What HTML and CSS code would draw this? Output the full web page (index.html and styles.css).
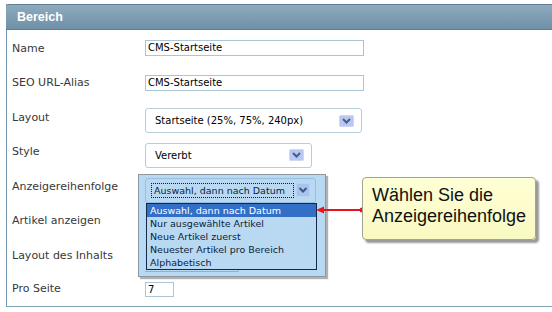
FILE: index.html
```html
<!DOCTYPE html>
<html lang="de">
<head>
<meta charset="UTF-8">
<meta name="viewport" content="width=device-width, initial-scale=1.0">
<title>Bereich</title>
<link rel="stylesheet" href="styles.css">
</head>
<body>
    <div class="panel">
        <div class="panel-head">Bereich</div>
        <div class="panel-body">
            <div class="row">
                <span class="label">Name</span>
                <span class="field">CMS-Startseite</span>
            </div>
            <div class="row">
                <span class="label">SEO URL-Alias</span>
                <span class="field">CMS-Startseite</span>
            </div>
            <div class="row">
                <span class="label">Layout</span>
                <span class="select select-wide">
                    <span class="select-text">Startseite (25%, 75%, 240px)</span>
                    <svg class="arrow" width="15" height="12" viewBox="0 0 15 12"><rect x="0.5" y="0.5" width="14" height="11" rx="1" fill="#b8c8f3" stroke="#cdd8f6"/><path d="M4 4 L7.5 7.5 L11 4" fill="none" stroke="#4a5d86" stroke-width="2"/></svg>
                </span>
            </div>
            <div class="row">
                <span class="label">Style</span>
                <span class="select select-mid">
                    <span class="select-text">Vererbt</span>
                    <svg class="arrow" width="15" height="12" viewBox="0 0 15 12"><rect x="0.5" y="0.5" width="14" height="11" rx="1" fill="#b8c8f3" stroke="#cdd8f6"/><path d="M4 4 L7.5 7.5 L11 4" fill="none" stroke="#4a5d86" stroke-width="2"/></svg>
                </span>
            </div>
            <div class="row row-open">
                <span class="label">Anzeigereihenfolge</span>
                <!-- geöffnete Auswahlliste -->
                <div class="popup">
                    <div class="select-focus">
                        <span class="focus-text">Auswahl, dann nach Datum</span>
                        <svg class="arrow" width="14" height="14" viewBox="0 0 14 14"><rect x="0.5" y="0.5" width="13" height="13" rx="1" fill="#a9c3ee" stroke="#b9d2f0"/><path d="M3.5 5 L7 8.5 L10.5 5" fill="none" stroke="#3e5680" stroke-width="2"/></svg>
                    </div>
                    <ul class="options">
                        <li class="selected">Auswahl, dann nach Datum</li>
                        <li>Nur ausgewählte Artikel</li>
                        <li>Neue Artikel zuerst</li>
                        <li>Neuester Artikel pro Bereich</li>
                        <li>Alphabetisch</li>
                    </ul>
                    <div class="ghost"></div>
                </div>
            </div>
            <div class="row">
                <span class="label">Artikel anzeigen</span>
            </div>
            <div class="row">
                <span class="label">Layout des Inhalts</span>
            </div>
            <div class="row row-last">
                <span class="label">Pro Seite</span>
                <span class="field field-small">7</span>
            </div>
        </div>
        <!-- Hinweis -->
        <svg class="connector" width="52" height="12" viewBox="0 0 52 12"><line x1="8" y1="6" x2="48" y2="6" stroke="#e8141b" stroke-width="2"/><polygon points="2,6 10,2.5 10,9.5" fill="#e8141b"/><circle cx="48" cy="6" r="2.5" fill="#e8141b"/></svg>
        <div class="callout">Wählen Sie die<br>Anzeigereihenfolge</div>
    </div>
</body>
</html>
```

FILE: styles.css
```css
body, html {
    margin: 0;
    padding: 0;
    background-color: #fff;
    overflow: hidden;
}
body {
    font-family: "DejaVu Sans", Verdana, sans-serif;
    color: #333;
}
.panel {
    position: relative;
    box-sizing: border-box;
    width: 560px;
    height: 303px;
    margin: 4px 0 0 6px;
    border-left: 1px solid #7196ae;
    border-bottom: 1px solid #7da2ba;
}
.panel-head {
    box-sizing: border-box;
    height: 26px;
    margin-left: -1px;
    padding-left: 11px;
    border-top: 1px solid #5f7f95;
    border-bottom: 1px solid #5d7e95;
    border-top-left-radius: 3px;
    background: linear-gradient(#8eaabe, #6f90a7);
    color: #fff;
    font-family: "Liberation Sans", Arial, sans-serif;
    font-weight: bold;
    font-size: 12.5px;
    line-height: 24px;
}
.panel-body {
    padding-top: 1px;
}
.row {
    display: flex;
    align-items: center;
    height: 34.5px;
    padding-left: 5px;
}
.row-last {
    height: 32px;
}
.row-open {
    position: relative;
}
.label {
    width: 133px;
    font-size: 11px;
    color: #383838;
}
.field {
    box-sizing: border-box;
    width: 219px;
    height: 16px;
    padding-left: 2px;
    border: 1px solid #a9c5d6;
    font-size: 10px;
    line-height: 14px;
    color: #000;
}
.field-small {
    width: 29px;
    height: 15px;
    line-height: 13px;
    margin-top: 2px;
}
.select {
    box-sizing: border-box;
    display: flex;
    align-items: center;
    justify-content: space-between;
    height: 25px;
    margin-top: 7px;
    padding: 0 7px 0 9px;
    border: 1px solid #b8ccda;
    border-radius: 3px;
    background-color: #fff;
    font-size: 10px;
    color: #000;
}
.select-wide {
    width: 217px;
}
.select-mid {
    width: 167px;
}
.arrow {
    display: block;
    flex: none;
}

/* aufgeklappte Liste */
.popup {
    position: absolute;
    left: 131px;
    top: 5px;
    box-sizing: border-box;
    width: 188px;
    height: 103px;
    padding: 3px 0 0 6px;
    border: 1px solid #8e979e;
    background-color: #b9d9f3;
    box-shadow: 2px 2px 1px rgba(0, 0, 0, 0.3);
}
.select-focus {
    box-sizing: border-box;
    display: flex;
    align-items: flex-start;
    width: 171px;
    height: 25px;
    padding: 4px 0 0 5px;
    border: 1px solid #9abedd;
    border-radius: 3px;
}
.focus-text {
    box-sizing: border-box;
    width: 143px;
    height: 15px;
    margin-right: 2px;
    padding-left: 2px;
    border: 1px dotted #0e1c33;
    font-size: 9.5px;
    line-height: 13px;
    color: #0c1d3a;
}
.options {
    list-style-type: none;
    width: 171px;
    margin: 0 0 0 1px;
    padding: 0;
    box-sizing: border-box;
    border: 1px solid #13294a;
}
.options li {
    height: 13px;
    padding-left: 3px;
    font-size: 9.5px;
    line-height: 13px;
    color: #0c1d3a;
}
.options .selected {
    background-color: #336fc6;
    color: #fff;
}
.ghost {
    width: 93px;
    height: 1px;
    border-bottom: 1px solid #8fb1cf;
    border-right: 1px solid #8fb1cf;
    border-bottom-right-radius: 3px;
}
.connector {
    position: absolute;
    left: 307px;
    top: 200px;
}
.callout {
    position: absolute;
    left: 355px;
    top: 173px;
    box-sizing: border-box;
    width: 174px;
    height: 63px;
    padding: 7px 0 0 9px;
    border: 1px solid #a3a393;
    border-radius: 4px;
    background: linear-gradient(#ffffd6, #f9f9c2);
    box-shadow: 3px 3px 2px rgba(0, 0, 0, 0.4);
    font-family: "Liberation Sans", Arial, sans-serif;
    font-size: 18px;
    line-height: 21px;
    color: #111;
}
```
